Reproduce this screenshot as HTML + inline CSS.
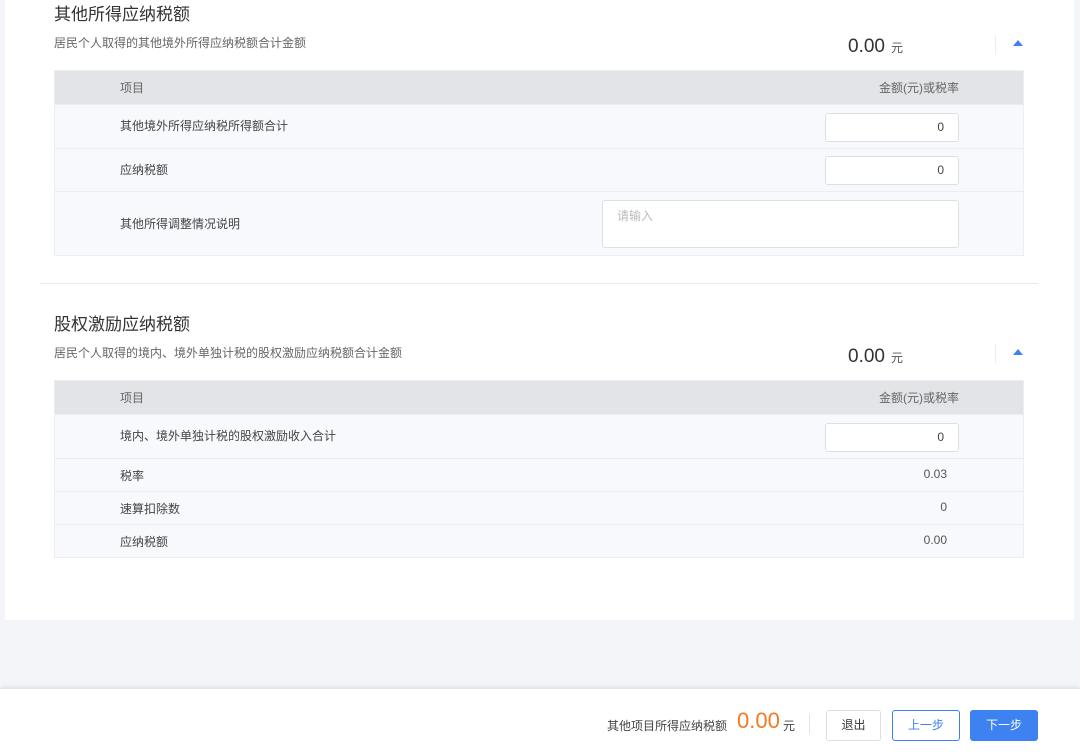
<!DOCTYPE html>
<html><head><meta charset="utf-8"><style>
*{margin:0;padding:0;box-sizing:border-box}
body{width:1080px;height:752px;background:#f4f5f8;position:relative;overflow:hidden;font-family:"Liberation Sans","Noto Sans CJK SC",sans-serif;color:#333}
.a{position:absolute;white-space:nowrap}
.panel{position:absolute;left:5px;top:0;width:1069px;height:620px;background:#fff}
.title{font-size:17px;color:#333}
.sub{font-size:12px;color:#666}
.amt{font-size:19px;color:#333}
.amt small{font-size:12px;margin-left:6px;color:#555}
.vd{width:1px;height:20px;background:#eceef2}
.tri{width:0;height:0;border-left:5px solid transparent;border-right:5px solid transparent;border-bottom:6px solid #3d82f0}
.tbl{position:absolute;left:54px;width:970px;background:#f8f9fc;border:1px solid #eceef2}
.hd{position:absolute;left:0;right:0;top:0;height:33px;background:#e3e4e7}
.hd span{position:absolute;top:8px;font-size:12px;color:#666}
.row{position:absolute;left:0;right:0;border-top:1px solid #eaecf0}
.row .l{position:absolute;left:65px;font-size:12px;color:#444}
.row .v{position:absolute;right:76px;font-size:12px;color:#555}
.inp{position:absolute;left:770px;width:134px;height:29px;background:#fff;border:1px solid #dcdfe6;border-radius:3px;font-size:12px;text-align:right;padding-right:14px;line-height:27px;color:#444}
.btn{position:absolute;top:710px;height:31px;border-radius:3px;font-size:12px;text-align:center;line-height:29px}
</style></head><body>
<div class="panel"></div>

<div class="a title" style="left:54px;top:0px">其他所得应纳税额</div>
<div class="a sub" style="left:54px;top:34px">居民个人取得的其他境外所得应纳税额合计金额</div>
<div class="a amt" style="left:848px;top:36px">0.00<small>元</small></div>
<div class="a vd" style="left:995px;top:35px"></div>
<div class="a tri" style="left:1013px;top:40px"></div>

<div class="tbl" style="top:70px;height:186px">
 <div class="hd"><span style="left:65px">项目</span><span style="right:64px">金额(元)或税率</span></div>
 <div class="row" style="top:33px;height:44px"><span class="l" style="top:12px">其他境外所得应纳税所得额合计</span><div class="inp" style="top:8px">0</div></div>
 <div class="row" style="top:77px;height:43px"><span class="l" style="top:12px">应纳税额</span><div class="inp" style="top:7px">0</div></div>
 <div class="row" style="top:120px;height:65px"><span class="l" style="top:23px">其他所得调整情况说明</span>
  <div class="a" style="left:547px;top:8px;width:357px;height:48px;background:#fff;border:1px solid #dcdfe6;border-radius:3px;font-size:12px;color:#bbb;padding:6px 14px">请输入</div></div>
</div>

<div class="a" style="left:40px;top:283px;width:998px;height:1px;background:#e8eaee"></div>

<div class="a title" style="left:54px;top:310px">股权激励应纳税额</div>
<div class="a sub" style="left:54px;top:344px">居民个人取得的境内、境外单独计税的股权激励应纳税额合计金额</div>
<div class="a amt" style="left:848px;top:346px">0.00<small>元</small></div>
<div class="a vd" style="left:995px;top:344px"></div>
<div class="a tri" style="left:1013px;top:349px"></div>

<div class="tbl" style="top:380px;height:178px">
 <div class="hd"><span style="left:65px">项目</span><span style="right:64px">金额(元)或税率</span></div>
 <div class="row" style="top:33px;height:44px"><span class="l" style="top:12px">境内、境外单独计税的股权激励收入合计</span><div class="inp" style="top:8px">0</div></div>
 <div class="row" style="top:77px;height:33px"><span class="l" style="top:8px">税率</span><span class="v" style="top:8px">0.03</span></div>
 <div class="row" style="top:110px;height:33px"><span class="l" style="top:8px">速算扣除数</span><span class="v" style="top:8px">0</span></div>
 <div class="row" style="top:143px;height:34px"><span class="l" style="top:8px">应纳税额</span><span class="v" style="top:8px">0.00</span></div>
</div>

<div class="a" style="left:0;top:688px;width:1080px;height:64px;background:#fff;box-shadow:0 -2px 3px rgba(0,0,0,0.06);border-top:1px solid #e4e6ea"></div>
<div class="a" style="left:607px;top:717px;font-size:12px;color:#444">其他项目所得应纳税额</div>
<div class="a" style="left:737px;top:708px;font-size:22px;color:#f47a20">0.00</div>
<div class="a" style="left:783px;top:717px;font-size:12px;color:#444">元</div>
<div class="a" style="left:809px;top:714px;width:1px;height:20px;background:#e2e4e8"></div>
<div class="btn" style="left:826px;width:55px;border:1px solid #dcdfe6;color:#333;background:#fff">退出</div>
<div class="btn" style="left:892px;width:68px;border:1px solid #3d82f0;color:#3d82f0;background:#fff">上一步</div>
<div class="btn" style="left:970px;width:68px;background:#3d82f0;color:#fff;border:1px solid #3d82f0">下一步</div>
</body></html>
